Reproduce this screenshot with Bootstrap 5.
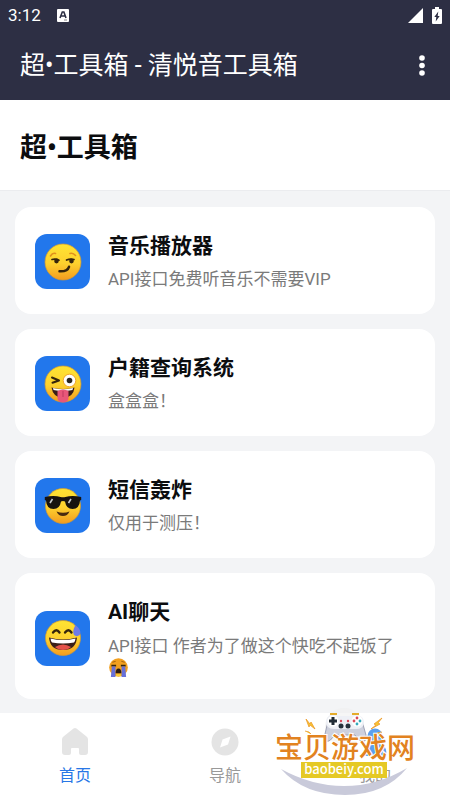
<!DOCTYPE html>
<html lang="zh-CN">
<head>
<meta charset="utf-8">
<meta name="viewport" content="width=device-width, initial-scale=1">
<title>超•工具箱</title>
<link href="https://cdn.jsdelivr.net/npm/bootstrap@5.3.0/dist/css/bootstrap.min.css" rel="stylesheet">
<style>
body{font-family:Roboto,"Noto Sans CJK SC",sans-serif;background:#f3f4f6;color:#0c0d0f}
svg{display:block;flex:none}
.app-top{background:#2d2f44}
.status-row{height:30px;font-size:17px;font-weight:400;line-height:30px}
.title-row{height:70px;padding:2px 20px 0}
.app-title{font-size:25px;line-height:36px}
.menu-btn{width:16px;height:40px}
.page-head{height:91px;padding:5px 20px 0;border-bottom:1px solid #ebecef}
.page-head h1{font-size:27px;line-height:40px;font-weight:700}
.tool-list{padding:16px 15px 13px;gap:15px}
.tool-card{border-radius:16px;padding:24px 20px 22px;gap:18px}
.tall-card{padding-bottom:20px}
.tool-icon{width:55px;height:55px;border-radius:12px;background:#2277ec}
.tool-card h2{font-size:21px;line-height:30px;font-weight:700;margin:0 0 6px}
.tool-card p{font-size:17px;line-height:25px;color:#7a7a7a}
.tool-card .two-line{line-height:22px;padding-top:2px}
.sob{display:inline-block;vertical-align:-4px}
.bottom-nav{min-height:87px}
.bottom-nav a{padding-top:14px;gap:6px;color:#999;font-size:16px;line-height:26px}
.bottom-nav a.active{color:#2877e6}
.brand-mark{right:25px;bottom:1px;width:155px;height:92px}
.brand-mark text{font-family:"Noto Sans CJK SC",sans-serif}
</style>
</head>
<body class="d-flex flex-column min-vh-100">
<svg width="0" height="0" class="position-absolute" aria-hidden="true">
  <defs><linearGradient id="face" x1="0" y1="0" x2="0" y2="1"><stop offset="0" stop-color="#ffe433"/><stop offset=".55" stop-color="#fdd02e"/><stop offset="1" stop-color="#f39b1f"/></linearGradient></defs>
</svg>
<header class="app-top text-white">
  <div class="status-row d-flex align-items-center ps-2 pe-2">
    <span>3:12</span>
    <svg class="ms-3" width="13" height="14" viewBox="0 0 13 14"><rect width="12" height="13" y="1" rx="1" fill="#fff"/><path d="M3 10 5.3 4h1.6L9 10M4.3 8h3.6" fill="none" stroke="#2d2f44" stroke-width="1.6"/><path d="M7 12h3" stroke="#888"/></svg>
    <svg class="ms-auto" width="16" height="15" viewBox="0 0 16 15"><path d="M15 0v15H0z" fill="#fff"/></svg>
    <svg class="ms-2" width="10" height="17" viewBox="0 0 10 17"><path d="M3 0h4v2h2q1 0 1 1v13q0 1-1 1H1q-1 0-1-1V3q0-1 1-1h2z" fill="#fff"/><path d="M6.3 4.5 2.3 10h2l-.6 4.5L7.7 9h-2z" fill="#2d2f44"/></svg>
  </div>
  <div class="title-row d-flex align-items-center justify-content-between">
    <div class="app-title">超•工具箱 - 清悦音工具箱</div>
    <button class="menu-btn btn p-0 border-0 d-flex align-items-center justify-content-center" type="button" aria-label="菜单"><svg width="6" height="22" viewBox="0 0 6 22" fill="#fff"><circle cx="3" cy="3" r="2.8"/><circle cx="3" cy="10.500" r="2.8"/><circle cx="3" cy="18" r="2.8"/></svg></button>
  </div>
</header>
<section class="page-head bg-white d-flex align-items-center"><h1 class="m-0">超•工具箱</h1></section>
<main class="tool-list d-flex flex-column flex-grow-1">
  <article class="tool-card bg-white d-flex align-items-center">
    <div class="tool-icon d-flex align-items-center justify-content-center flex-shrink-0"><svg width="38" height="38" viewBox="0 0 38 38"><circle cx="19" cy="19" r="18" fill="url(#face)" stroke="#d59a2c" stroke-width=".7"/><g fill="none" stroke-linecap="round"><path d="M6.500 13q2-3.500 5-2.600M26 10.500q3-1 5.500 2" stroke="#e0901c" stroke-width="1.6"/><path d="M8 16.500q4-.8 7 .7M22.500 17q3.500-1.500 7.500-.5" stroke="#35250c" stroke-width="1.7"/><path d="M15.500 28.300q8 .5 9.500-4.500" stroke="#35250c" stroke-width="2.500"/></g><ellipse cx="12.500" cy="18" rx="2.300" ry="2.400" fill="#35250c"/><ellipse cx="27.500" cy="18" rx="2.300" ry="2.400" fill="#35250c"/></svg></div>
    <div><h2>音乐播放器</h2><p class="m-0">API接口免费听音乐不需要VIP</p></div>
  </article>
  <article class="tool-card bg-white d-flex align-items-center">
    <div class="tool-icon d-flex align-items-center justify-content-center flex-shrink-0"><svg width="38" height="38" viewBox="0 0 38 38"><circle cx="19" cy="19" r="18" fill="url(#face)" stroke="#d59a2c" stroke-width=".7"/><circle cx="25.500" cy="15.500" r="6.300" fill="#fff" stroke="#f1a528"/><circle cx="25.500" cy="15.500" r="2.800" fill="#292521"/><path d="m8 12.500 7 3-6.500 2.200" fill="none" stroke="#35250c" stroke-width="2" stroke-linecap="round" stroke-linejoin="round"/><path d="M7.500 22.500q12 3 23 0-1 10-11.500 10.500Q9 32.500 7.500 22.500" fill="#3b1f18"/><path d="M9 23q10 2.500 20 0l-.5 2q-9.500 2-19 0z" fill="#fff"/><path d="M13.500 26q5.500-3 11 0v6.500q0 5-5.500 5t-5.500-5z" fill="#e85779"/><path d="M19 26v6" stroke="#bf3b61"/></svg></div>
    <div><h2>户籍查询系统</h2><p class="m-0">盒盒盒！</p></div>
  </article>
  <article class="tool-card bg-white d-flex align-items-center">
    <div class="tool-icon d-flex align-items-center justify-content-center flex-shrink-0"><svg width="38" height="38" viewBox="0 0 38 38"><circle cx="19" cy="19" r="17.500" fill="url(#face)" stroke="#d59a2c" stroke-width=".7"/><path d="M.8 10q9-2 15.800 0 2.400.7 4.800 0Q28.200 8 37.200 10v3l-1.200.6Q35.500 22 28.500 22q-6.300 0-7.500-7.500-2-1-4 0Q15.800 22 9.500 22 2.500 22 2 13.600L.8 13z" fill="#17130f"/><path d="m6 16 2.500-4M24.500 16l2.500-4" stroke="#c4c7cb" stroke-width="1.600"/><path d="M12.500 24.500q6.500 2.500 13 0-2 4.500-6.500 4.500t-6.500-4.500" fill="#4a2b10"/></svg></div>
    <div><h2>短信轰炸</h2><p class="m-0">仅用于测压！</p></div>
  </article>
  <article class="tool-card tall-card bg-white d-flex align-items-center">
    <div class="tool-icon d-flex align-items-center justify-content-center flex-shrink-0"><svg width="38" height="38" viewBox="0 0 38 38"><circle cx="19" cy="19" r="17.500" fill="url(#face)" stroke="#d59a2c" stroke-width=".7"/><path d="M9 13.500q3.500-4.500 6.500 0M21 13.500q3.500-4.500 6.500 0" fill="none" stroke="#35250c" stroke-width="2.300" stroke-linecap="round"/><path d="M5 18.500q14 4 28 0-1 12.500-14 12.500T5 18.500" fill="#3b1f18"/><path d="M6.500 19.500q12.500 3 25 0-.2 2.500-1.500 4-11 2-22 0-1.300-1.500-1.500-4" fill="#fff"/><path d="M11 28q8-5 16 0-3 3-8 3t-8-3" fill="#e4524a"/><path d="M31.500 6q6.500 5.500 4.500 9.500-3 3-6 .5-2-4 1.500-10" fill="#6f7be6"/></svg></div>
    <div><h2>AI聊天</h2><p class="two-line m-0">API接口 作者为了做这个快吃不起饭了<br><svg class="sob" width="21" height="20" viewBox="0 0 21 21" role="img" aria-label="大哭"><circle cx="10.500" cy="10" r="9.800" fill="#f2a01f"/><path d="M4 4.500 7.500 3.500M13.500 3.500 17 4.500" stroke="#9c5c13"/><path d="M3 8h5M13 8h5" stroke="#35250c" stroke-width="1.700"/><path d="M3.500 9h3.800v11H2.500zM13.700 9h3.800l1 11h-4.800z" fill="#6670d9"/><path d="M7.500 16q0-5 3-5t3 5z" fill="#291a12"/><path d="M8 17h5v2H8z" fill="#f7cf35"/></svg></p></div>
  </article>
</main>
<nav class="bottom-nav bg-white d-flex position-relative" aria-label="主导航">
  <a href="#" class="active d-flex flex-column align-items-center text-decoration-none w-100" aria-current="page"><svg width="30" height="30" viewBox="0 0 30 30"><path d="M13.500 1.500q1.500-1 3 0l10 8q1.500 1.200 1.500 3V25q0 3-3 3h-4q-2 0-2-2v-4q0-1-1-1h-6q-1 0-1 1v4q0 2-2 2H5q-3 0-3-3V12.500q0-1.800 1.500-3z" fill="#e4e4e4"/></svg>首页</a>
  <a href="#" class="d-flex flex-column align-items-center text-decoration-none w-100"><svg width="30" height="30" viewBox="0 0 30 30"><circle cx="15" cy="15" r="13.500" fill="#e4e4e4"/><path d="m20.500 9.500-2.500 8-8 3 2.500-8z" fill="#fff"/></svg>导航</a>
  <a href="#" class="d-flex flex-column align-items-center text-decoration-none w-100"><svg width="30" height="30" viewBox="0 0 30 30" fill="#5c9fee"><circle cx="15" cy="9" r="7.500"/><path d="M4 29q-2-11 8-12h6q10 1 8 12z"/></svg>我的</a>
  <svg class="brand-mark position-absolute pe-none" viewBox="0 0 155 92" role="img" aria-label="宝贝游戏网 baobeiy.com">
    <path d="M11 62q31 17 63 17 33 0 63-18-22 27-62 27Q34 88 11 62" fill="#c9cada"/>
    <circle cx="74" cy="20" r="19" fill="#eee" opacity=".55"/>
    <path d="M61 10h27q3 0 4 4l4 14q1 8-5 6-3-1-6-6H65q-3 4-6 6-7 2-4-7l3-13q1-4 3-4z" fill="#cdd0dd" stroke="#8f93a8" stroke-width=".8"/>
    <path d="M62 8q4-1 6 1h13q2-2 6-1 7 1 7 8-1 6-8 6H64q-8 0-8-7 0-6 6-7z" fill="#eef0f6"/>
    <path d="M60 7h7M82 7h7" stroke="#e5ac2b" stroke-width="2"/>
    <circle cx="63" cy="14" r="5.500" fill="#fff"/><circle cx="87" cy="14" r="5.500" fill="#fff"/>
    <path d="M63 10v8M59 14h8" stroke="#202b35" stroke-width="3"/>
    <g fill="#26313c"><circle cx="71" cy="19" r="2.500"/><circle cx="78" cy="19" r="2.500"/></g>
    <g fill="#d9495a"><circle cx="71" cy="14" r="1.200"/><circle cx="78" cy="14" r="1.200"/><circle cx="87" cy="11" r="1.400"/><circle cx="84" cy="14" r="1.400"/></g>
    <g fill="#35a9bb"><circle cx="90" cy="14" r="1.400"/><circle cx="87" cy="17" r="1.400"/></g>
    <path d="m36 12 4 5 1-2 4 7-5-4-1 2zM112 11l-8 6 2 1-5 4 9-5-2-1zM35 24l4 1 3 3M112 25l-5 1-3 3" fill="#f8c531" stroke="#ec9b2a" stroke-width=".8"/>
    <text x="5" y="51" font-size="28" fill="#e28220" stroke="#fff" stroke-width="2" paint-order="stroke" font-weight="500">宝贝游戏网</text>
    <path d="M31 55h86v16H31z" fill="#e5c925"/>
    <text x="74" y="67" text-anchor="middle" font-size="13" fill="#fff" font-weight="500">baobeiy.com</text>
  </svg>
</nav>
<script src="https://cdn.jsdelivr.net/npm/bootstrap@5.3.0/dist/js/bootstrap.bundle.min.js"></script>
</body>
</html>
